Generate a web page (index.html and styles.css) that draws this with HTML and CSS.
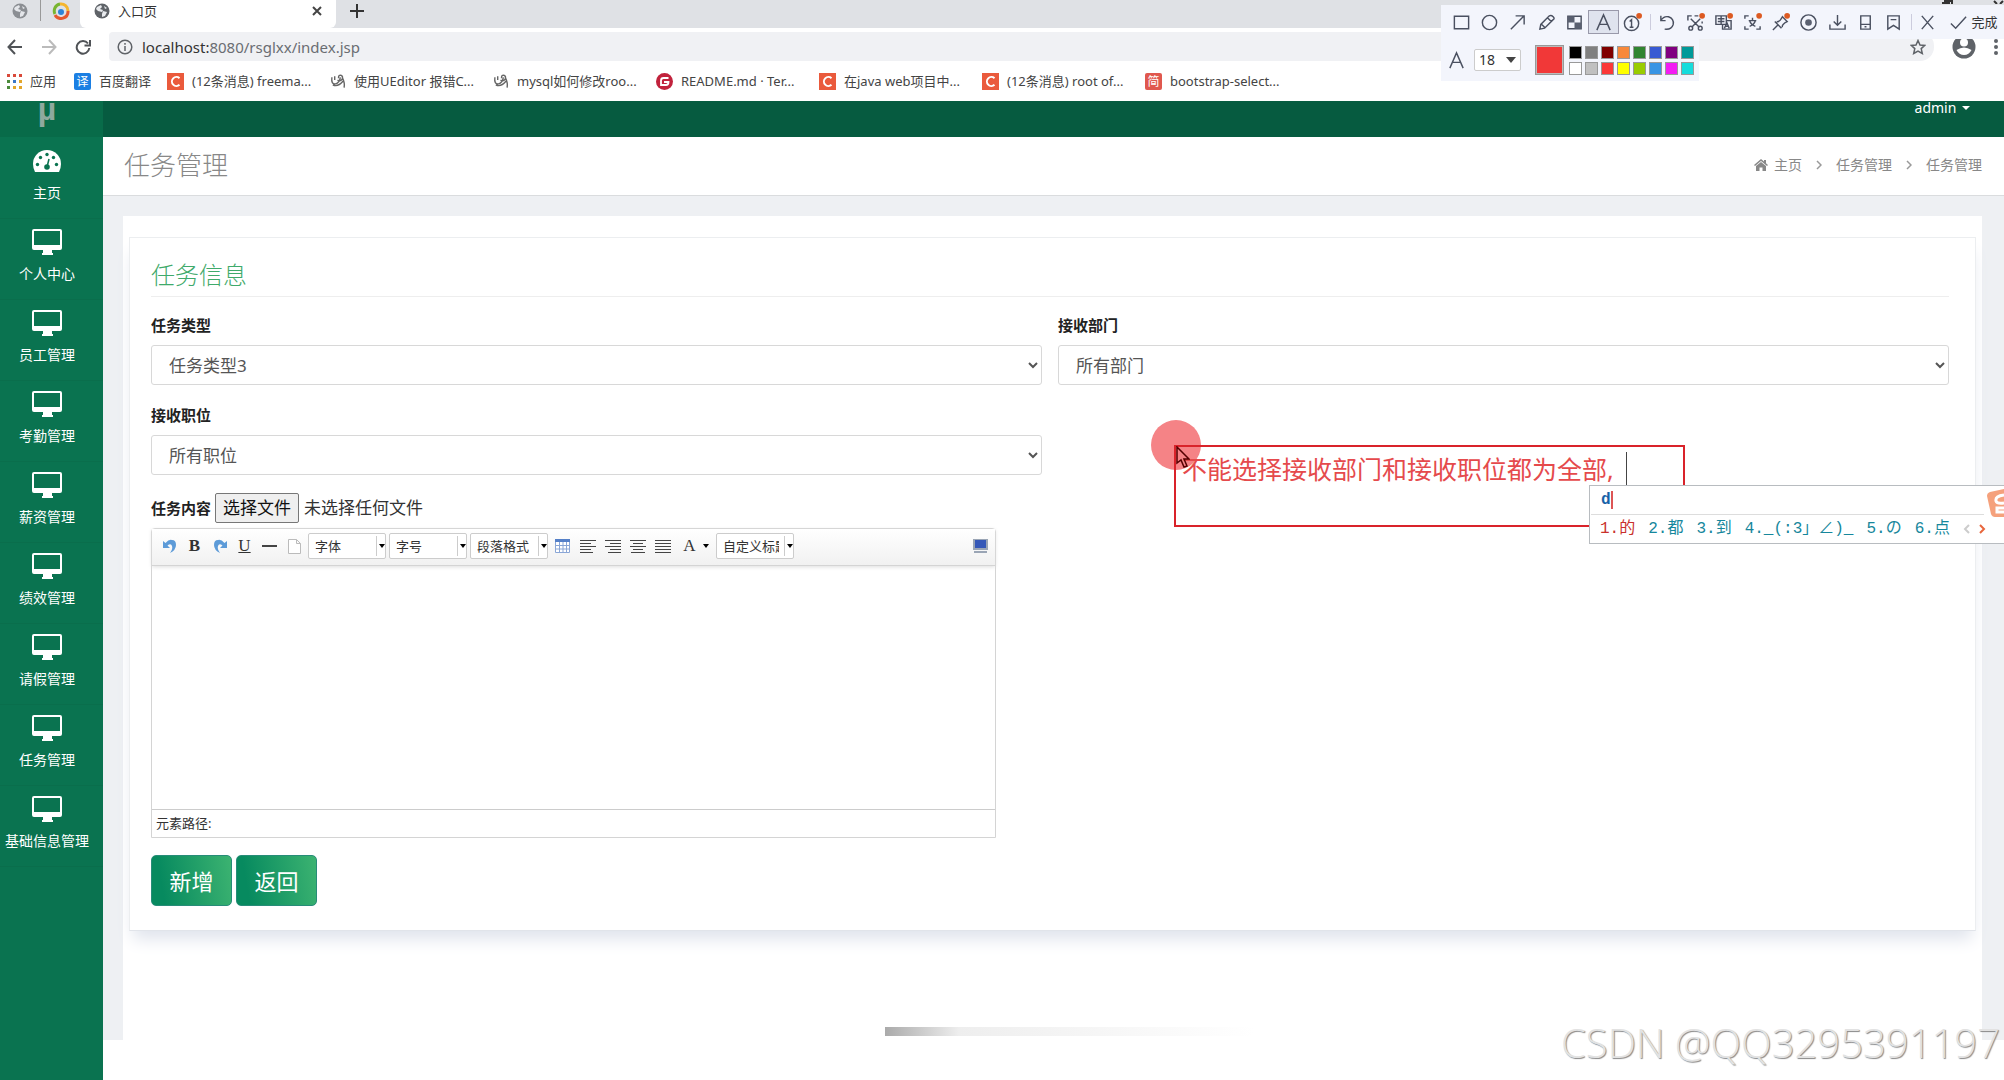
FILE: index.html
```html
<!DOCTYPE html>
<html lang="zh-CN">
<head>
<meta charset="utf-8">
<title>入口页</title>
<link rel="stylesheet" href="styles.css">
</head>
<body>
<svg class="defs" aria-hidden="true">
  <symbol id="desktop" viewBox="0 0 30 26"><path fill="currentColor" fill-rule="evenodd" d="M2 0h26q2 0 2 2v17q0 2-2 2h-8v3h1v2H10v-2h1v-3H2q-2 0-2-2V2q0-2 2-2zM2 2v14h26V2z"/></symbol>
  <symbol id="globe" viewBox="0 0 16 16"><circle cx="8" cy="8" r="7.500" fill="#5f6368"/><path fill="#e8eaed" d="M3 4l4-2 1 2-2 2 3 1-1 2-4-1-2-2zM9 8l4 1-2 4-3 1V11zM10 3l3 2-2 1z"/></symbol>
  <symbol id="csdn" viewBox="0 0 17 17"><rect width="17" height="17" fill="#ea5a3c"/><path d="M12.500 5.200a4.500 4.500 0 1 0 0 6.600" fill="none" stroke="#fff" stroke-width="2"/></symbol>
  <symbol id="swirl" viewBox="0 0 17 17"><path d="M2 4q-1 8 4 7 4-1 5-7M5 3v4M9 5q0-4 3-3 2 1 1 4-2 3-5 1M13 4q3 6 2 11M3 12q5 3 11-4" fill="none" stroke="#666" stroke-width="1.500"/></symbol>
</svg>

<header class="browser">
  <div class="tabs">
    <div class="pinned"><svg width="16" height="16" opacity=".65"><use href="#globe"/></svg></div>
    <div class="pinned pinned-last"><svg width="18" height="18" viewBox="0 0 18 18" fill="none" stroke-width="3"><path d="M3 12A7 7 0 0 1 8 2" stroke="#79b530"/><path d="M8 2a7 7 0 0 1 8 7" stroke="#f5b52e"/><path d="M16 9a7 7 0 0 1-13 4" stroke="#e6592e"/><circle cx="9" cy="10" r="3" fill="#2d84d8"/></svg></div>
    <div class="tab"><svg width="16" height="16"><use href="#globe"/></svg><span>入口页</span><button aria-label="关闭"><svg width="10" height="10" viewBox="0 0 10 10" stroke="#444" stroke-width="2"><path d="M1 1l8 8M9 1L1 9"/></svg></button></div>
    <button class="new-tab" aria-label="新标签页"><svg width="14" height="14" viewBox="0 0 14 14" stroke="#333" stroke-width="2"><path d="M7 0v14M0 7h14"/></svg></button>
  </div>
  <div class="address">
    <button aria-label="后退"><svg width="16" height="16" viewBox="0 0 16 16" fill="none" stroke="#505357" stroke-width="2"><path d="M15 8H2M8 1L1.500 8 8 15"/></svg></button>
    <button aria-label="前进"><svg width="16" height="16" viewBox="0 0 16 16" fill="none" stroke="#bbb" stroke-width="2"><path d="M1 8h13M8 1l6.500 7L8 15"/></svg></button>
    <button aria-label="刷新"><svg width="16" height="16" viewBox="0 0 16 16" fill="none" stroke="#505357" stroke-width="2"><path d="M13 4.500A6.300 6.300 0 1 0 14.300 9M15 1v5.500H9.500"/></svg></button>
    <div class="omnibox">
      <svg width="16" height="16" viewBox="0 0 16 16" fill="none" stroke="#5f6368" stroke-width="1.500"><circle cx="8" cy="8" r="6.800"/><path d="M8 7v5M8 4v1.800"/></svg>
      <span class="url"><b>localhost:</b>8080/rsglxx/index.jsp</span>
      <svg width="16" height="16" viewBox="0 0 16 16" fill="none" stroke="#5f6368" stroke-width="1.500"><path d="M8 1.500l2 4.500 4.800.4-3.600 3.200 1.100 4.900L8 12l-4.300 2.500 1.100-4.900L1.200 6.400 6 6z"/></svg>
    </div>
    <svg class="avatar" width="24" height="24" viewBox="0 0 24 24"><circle cx="12" cy="12" r="11.500" fill="#5f6368"/><circle cx="12" cy="7.500" r="4" fill="#fff"/><path d="M4.500 15q7.500-5 15 0-2.500 5-7.500 5t-7.500-5z" fill="#fff"/></svg>
    <svg width="4" height="18" viewBox="0 0 4 18" fill="#5f6368"><circle cx="2" cy="3" r="2"/><circle cx="2" cy="9" r="2"/><circle cx="2" cy="15" r="2"/></svg>
  </div>
  <nav class="bookmarks">
    <a href="#"><svg width="15" height="15" viewBox="0 0 15 15"><path fill="#d9493a" d="M0 0h3v3H0zM6 0h3v3H6zM12 0h3v3h-3z"/><path fill="#4b8b3b" d="M0 6h3v3H0z"/><path fill="#3a77c9" d="M6 6h3v3H6z"/><path fill="#e3a62b" d="M12 6h3v3h-3zM6 12h3v3H6zM12 12h3v3h-3z"/><path fill="#4b8b3b" d="M0 12h3v3H0z"/></svg>应用</a>
    <a href="#"><span class="fav fav-blue">译</span>百度翻译</a>
    <a href="#"><svg width="17" height="17"><use href="#csdn"/></svg>(12条消息) freema...</a>
    <a href="#"><svg width="16" height="17"><use href="#swirl"/></svg>使用UEditor 报错C...</a>
    <a href="#"><svg width="16" height="17"><use href="#swirl"/></svg>mysql如何修改roo...</a>
    <a href="#"><svg width="17" height="17" viewBox="0 0 17 17"><circle cx="8.500" cy="8.500" r="8.500" fill="#c1223c"/><path d="M12.500 5H7.500Q5 5 5 7.500V12h5q2.500 0 2.500-3H8" fill="none" stroke="#fff" stroke-width="1.800"/></svg>README.md · Ter...</a>
    <a href="#"><svg width="17" height="17"><use href="#csdn"/></svg>在java web项目中...</a>
    <a href="#"><svg width="17" height="17"><use href="#csdn"/></svg>(12条消息) root of...</a>
    <a href="#"><span class="fav fav-red">简</span>bootstrap-select...</a>
  </nav>
</header>

<div class="app">
  <aside class="sidebar">
    <div class="brand">µ</div>
    <nav class="menu">
      <a href="#"><svg width="28" height="22" viewBox="0 0 28 22"><path fill="#fff" d="M2 22Q0 18 0 14a14 14 0 0 1 28 0q0 4-2 8z"/><g fill="#0a7350"><circle cx="4.500" cy="14.500" r="1.700"/><circle cx="7.500" cy="7.500" r="1.700"/><circle cx="14" cy="4.500" r="1.700"/><circle cx="20.500" cy="7.500" r="1.700"/><circle cx="23.500" cy="14.500" r="1.700"/><circle cx="14" cy="17" r="2.800"/></g><path d="M14 17l2-8" stroke="#0a7350" stroke-width="1.500"/></svg>主页</a>
      <a href="#"><svg width="30" height="26"><use href="#desktop"/></svg>个人中心</a>
      <a href="#"><svg width="30" height="26"><use href="#desktop"/></svg>员工管理</a>
      <a href="#"><svg width="30" height="26"><use href="#desktop"/></svg>考勤管理</a>
      <a href="#"><svg width="30" height="26"><use href="#desktop"/></svg>薪资管理</a>
      <a href="#"><svg width="30" height="26"><use href="#desktop"/></svg>绩效管理</a>
      <a href="#"><svg width="30" height="26"><use href="#desktop"/></svg>请假管理</a>
      <a href="#"><svg width="30" height="26"><use href="#desktop"/></svg>任务管理</a>
      <a href="#"><svg width="30" height="26"><use href="#desktop"/></svg>基础信息管理</a>
    </nav>
  </aside>
  <div class="main">
    <div class="topbar"><a href="#">admin <svg width="8" height="4" viewBox="0 0 8 4"><path fill="#fff" d="M0 0h8L4 4z"/></svg></a></div>
    <div class="titlebar">
      <h1>任务管理</h1>
      <nav class="crumbs">
        <a href="#"><svg width="14" height="12" viewBox="0 0 14 12"><path fill="#888" d="M7 0l3 2.600V1h2v3.300L14 6l-1 1-6-5-6 5-1-1zM2 7l5-4 5 4v5H8.500V8.500h-3V12H2z"/></svg>主页</a>
        <svg width="6" height="10" viewBox="0 0 6 10" fill="none" stroke="#999" stroke-width="1.500"><path d="M1 1l4 4-4 4"/></svg>
        <a href="#">任务管理</a>
        <svg width="6" height="10" viewBox="0 0 6 10" fill="none" stroke="#999" stroke-width="1.500"><path d="M1 1l4 4-4 4"/></svg>
        <a href="#">任务管理</a>
      </nav>
    </div>
    <main class="content">
      <div class="panel">
        <form class="card">
          <h2>任务信息</h2>
          <div class="fields">
            <div class="field"><label for="type">任务类型</label><select id="type"><option>任务类型3</option></select></div>
            <div class="field"><label for="dept">接收部门</label><select id="dept"><option>所有部门</option></select></div>
            <div class="field"><label for="post">接收职位</label><select id="post"><option>所有职位</option></select></div>
          </div>
          <div class="file-row">
            <label for="file">任务内容</label>
            <input type="file" id="file" class="file-input">
            <label for="file" class="file-button">选择文件</label>
            <span>未选择任何文件</span>
          </div>
          <div class="editor">
            <div class="tools">
              <button type="button" aria-label="撤销"><svg width="14" height="14" viewBox="0 0 14 14"><path d="M0 2v7h7L4.500 6.500Q8 4 9 7t-2 7q6-3 6-8T9 1Q6 0 2.500 4z" fill="#5d9bd8"/></svg></button>
              <button type="button" class="serif"><b>B</b></button>
              <button type="button" aria-label="重做"><svg width="14" height="14" viewBox="0 0 14 14"><path d="M14 2v7H7l2.500-2.500Q6 4 5 7t2 7Q1 11 1 6t4-5q3-1 6.500 3z" fill="#5d9bd8"/></svg></button>
              <button type="button" class="serif"><u>U</u></button>
              <button type="button" aria-label="分隔线"><svg width="15" height="2"><path fill="#444" d="M0 0h15v2H0z"/></svg></button>
              <button type="button" aria-label="清空"><svg width="13" height="15" viewBox="0 0 13 15" fill="#fff" stroke="#bbb"><path d="M.5.500h8l4 4v10H.5zM8.500.500v4h4"/></svg></button>
              <span class="combo"><select aria-label="字体"><option>字体</option></select><svg width="6" height="4" viewBox="0 0 6 4"><path d="M0 0h6L3 4z"/></svg></span>
              <span class="combo"><select aria-label="字号"><option>字号</option></select><svg width="6" height="4" viewBox="0 0 6 4"><path d="M0 0h6L3 4z"/></svg></span>
              <span class="combo"><select aria-label="段落格式"><option>段落格式</option></select><svg width="6" height="4" viewBox="0 0 6 4"><path d="M0 0h6L3 4z"/></svg></span>
              <button type="button" aria-label="表格"><svg width="15" height="14" viewBox="0 0 15 14" fill="none"><path fill="#fff" stroke="#8aa6d6" d="M.5.500h14v13H.5zM.5 6.500h14M.5 10h14M4.500 3v11M8 3v11M11.500 3v11"/><path fill="#5580c8" d="M0 0h15v3H0z"/></svg></button>
              <button type="button" aria-label="居左"><svg width="16" height="13" viewBox="0 0 16 13" stroke="#444"><path d="M0 .5h16M0 3.500h11M0 6.500h16M0 9.500h11M0 12.500h13"/></svg></button>
              <button type="button" aria-label="居右"><svg width="16" height="13" viewBox="0 0 16 13" stroke="#444"><path d="M0 .5h16M5 3.500h11M0 6.500h16M5 9.500h11M3 12.500h13"/></svg></button>
              <button type="button" aria-label="居中"><svg width="16" height="13" viewBox="0 0 16 13" stroke="#444"><path d="M0 .5h16M3 3.500h10M0 6.500h16M3 9.500h10M1 12.500h14"/></svg></button>
              <button type="button" aria-label="两端对齐"><svg width="16" height="13" viewBox="0 0 16 13" stroke="#444"><path d="M0 .5h16M0 3.500h16M0 6.500h16M0 9.500h16M0 12.500h16"/></svg></button>
              <button type="button" class="serif color">A<svg width="6" height="4" viewBox="0 0 6 4"><path d="M0 0h6L3 4z"/></svg></button>
              <span class="combo"><select aria-label="自定义标题"><option>自定义标题</option></select><svg width="6" height="4" viewBox="0 0 6 4"><path d="M0 0h6L3 4z"/></svg></span>
              <button type="button" class="full" aria-label="全屏"><svg width="15" height="14" viewBox="0 0 15 14"><path fill="#9aa5b5" d="M0 0h15v11H0zM1 12h13v2H1z"/><path fill="#3558b8" d="M2 1h11v8H2z"/></svg></button>
            </div>
            <textarea class="editor-body" aria-label="任务内容"></textarea>
            <div class="path">元素路径:</div>
          </div>
          <div class="actions"><button type="button">新增</button><button type="button">返回</button></div>
        </form>
      </div>
    </main>
  </div>
</div>

<div class="window-bits"><svg width="64" height="4" viewBox="0 0 64 4" fill="none" stroke="#333" stroke-width="2"><path d="M2 3h8M4 1h8v3M54 1l3 3M63 1l-3 3"/></svg></div>
<div class="snip">
  <div class="snip-tools">
    <button aria-label="矩形"><svg viewBox="0 0 20 20"><path d="M2.500 3.500h15v13h-15z"/></svg></button>
    <button aria-label="椭圆"><svg viewBox="0 0 20 20"><circle cx="10" cy="10" r="7.500"/></svg></button>
    <button aria-label="箭头"><svg viewBox="0 0 20 20"><path d="M3 17L17 3M8 3h9v9"/></svg></button>
    <button aria-label="画笔"><svg viewBox="0 0 20 20"><path d="M3 17l1-5 9-9q2-1 4 1t0 3l-9 9zM11 5l4 4M5 12l3 3"/></svg></button>
    <button aria-label="马赛克"><svg viewBox="0 0 20 20"><path d="M3 3.500h14v13H3z"/><path class="fill" d="M3 3.500h7V10H3zM10 10h7v6.500h-7z"/></svg></button>
    <button class="on" aria-label="文字"><svg viewBox="0 0 20 20"><path d="M3 18L10 2l7 16M6 12h8"/></svg></button>
    <button aria-label="序号"><svg viewBox="0 0 20 20"><circle cx="9" cy="11" r="7.500"/><path d="M7 9l2-2v8M7 15h4"/><circle class="dot" cx="17" cy="3" r="3"/></svg></button>
    <i></i>
    <button aria-label="撤销"><svg viewBox="0 0 20 20"><path d="M3 3v5h5M3 8q3-5 8-4 6 2 5 8-2 6-9 5"/></svg></button>
    <button aria-label="截图"><svg viewBox="0 0 20 20"><path d="M2 8V3h4M9 3h4M5 6l9 9M15 6l-9 9M17 9v2"/><circle cx="5" cy="16" r="2"/><circle cx="15" cy="16" r="2"/><circle class="dot" cx="17" cy="3" r="3"/></svg></button>
    <button aria-label="翻译"><svg viewBox="0 0 20 20"><path d="M2 3h11v9H2zM4 6h7M4 9h7M7.500 3v9M9 12v5h9V8h-5M11 16l2.500-6 2.500 6M12 14h3"/><circle class="dot" cx="17" cy="3" r="3"/></svg></button>
    <button aria-label="文字识别"><svg viewBox="0 0 20 20"><path d="M2 6V3h4M2 14v3h4M18 14v3h-4M6 8h8M10 5v3M7 14q5-2 6-6M7 8q1 4 6 6"/><circle class="dot" cx="17" cy="3" r="3"/></svg></button>
    <button aria-label="钉住"><svg viewBox="0 0 20 20"><path d="M2 18l5-5M4 9l7 7M6 9q3 1 6-5l5 5q-6 3-5 6"/><circle class="dot" cx="17" cy="3" r="3"/></svg></button>
    <button aria-label="录制"><svg viewBox="0 0 20 20"><circle cx="10" cy="10" r="8"/><circle class="fill" cx="10" cy="10" r="3.500"/></svg></button>
    <button aria-label="下载"><svg viewBox="0 0 20 20"><path d="M10 2v11M6 9l4 4 4-4M2 12v5h16v-5"/></svg></button>
    <button aria-label="发送到手机"><svg viewBox="0 0 20 20"><path d="M5 3h10v14H5zM5 12h10M9 14.500h2"/></svg></button>
    <button aria-label="收藏"><svg viewBox="0 0 20 20"><path d="M4 3h12v14l-6-4-6 4zM7 7h6"/></svg></button>
    <i></i>
    <button aria-label="取消"><svg viewBox="0 0 20 20"><path d="M4 3l12 14M16 3L4 17"/></svg></button>
    <button class="done"><svg viewBox="0 0 20 20"><path d="M2 11l5 5L18 4"/></svg>完成</button>
  </div>
  <div class="snip-style">
    <svg class="glyph" viewBox="0 0 20 20"><path d="M3 18L10 2l7 16M6 12h8"/></svg>
    <span class="combo size"><select aria-label="字号"><option>18</option></select><svg width="10" height="6" viewBox="0 0 10 6"><path d="M0 0h10L5 6z"/></svg></span>
    <span class="current"></span>
    <div class="swatches">
      <span style="background:#000"></span><span style="background:#808080"></span><span style="background:#800000"></span><span style="background:#f7883a"></span><span style="background:#308430"></span><span style="background:#385ad3"></span><span style="background:#800080"></span><span style="background:#099"></span>
      <span style="background:#fff"></span><span style="background:#c0c0c0"></span><span style="background:#fb3838"></span><span style="background:#ff0"></span><span style="background:#9c0"></span><span style="background:#3894e4"></span><span style="background:#f31bf3"></span><span style="background:#16dcdc"></span>
    </div>
  </div>
</div>

<div class="spot"></div>
<div class="note"><span>不能选择接收部门和接收职位都为全部,</span></div>
<svg class="cursor" width="14" height="22" viewBox="0 0 14 22"><path d="M1 1v16l4-3 3 7 3-1-3-7h5z" fill="none" stroke="#500" stroke-width="1.500"/></svg>
<div class="ime">
  <div class="ime-input">d</div>
  <div class="ime-list"><span class="first">1.的</span><span>2.都</span><span>3.到</span><span>4._(:3」∠)_</span><span>5.の</span><span>6.点</span><svg width="24" height="10" viewBox="0 0 24 10" fill="none" stroke-width="2"><path d="M6 1L2 5l4 4" stroke="#ccc"/><path d="M17 1l4 4-4 4" stroke="#e8663c"/></svg></div>
  <svg class="sogou" width="18" height="30" viewBox="0 0 18 30"><path d="M18 1L4 4Q1 5 1 8l4 18q1 3 4 3h9z" fill="#f5a17c"/><path d="M18 7q-9 1-8 6 1 3 8 2M18 20h-7v4h7" fill="none" stroke="#fff" stroke-width="3"/></svg>
</div>
<div class="streak"></div>
<div class="watermark">CSDN @QQ3295391197</div>
</body>
</html>
```
FILE: styles.css
```css
* { box-sizing: border-box; }
body {
  margin: 0; min-height: 100vh; position: relative; overflow-x: hidden;
  display: flex; flex-direction: column;
  font: 14px/20px "Noto Sans", "Noto Sans CJK SC", sans-serif;
  color: #333; background: #fff;
}
a { color: inherit; text-decoration: none; }
button { border: 0; padding: 0; background: none; font: inherit; color: inherit; }
button, .menu a { cursor: pointer; }
svg { flex: none; }
.defs { position: absolute; width: 0; height: 0; }

/* browser window */
.browser { height: 101px; flex: none; }
.tabs { display: flex; height: 28px; background: #dfe1e5; }
.tabs > * { display: flex; align-items: center; height: 21px; }
.pinned { width: 41px; justify-content: center; border-right: 1px solid #999; }
.pinned-last { width: 39px; border: 0; }
.tabs .tab { width: 256px; height: 28px; padding: 0 14px 7px; gap: 8px; background: #fff; font-size: 13px; border-radius: 0 0 6px 6px; }
.tab span { flex: 1; }
.new-tab { padding-left: 14px; }
.address { display: flex; align-items: center; height: 37px; padding: 0 6px 0 7px; gap: 18px; }
.address button { display: flex; }
.omnibox { flex: 1; display: flex; align-items: center; gap: 9px; height: 29px; padding: 0 8px; background: #f0f1f4; border-radius: 4px 14px 14px 4px; }
.url { flex: 1; font-size: 15px; color: #6a6d72; }
.url b { font-weight: 400; color: #333; }
.bookmarks { display: grid; grid-template-columns: 67px 93px repeat(7, 163px); padding: 6px 0 0 7px; font-size: 13px; color: #444; }
.bookmarks a { display: flex; align-items: center; gap: 8px; height: 20px; white-space: nowrap; }
.fav { width: 17px; height: 17px; font-size: 12px; line-height: 17px; text-align: center; color: #fff; border-radius: 2px; }
.fav-blue { background: #1b7fe3; }
.fav-red { background: #e0584e; }

/* application */
.app { flex: 1; display: flex; }
.sidebar { width: 103px; flex: none; background: #0a7350; color: #fff; }
.brand { height: 36px; padding-right: 9px; overflow: hidden; background: #086b49; color: #8fa99e; font: bold 32px/16px "Liberation Sans", sans-serif; text-align: center; }
.menu { padding-top: 1px; }
.menu a { display: flex; flex-direction: column; align-items: center; height: 81px; padding: 10px 9px 15px 0; justify-content: space-between; border-bottom: 1px solid #0a6e4c; white-space: nowrap; }
.menu svg { height: 26px; }
.main { flex: 1; min-width: 0; display: flex; flex-direction: column; }
.topbar { height: 36px; padding-right: 34px; background: #065b40; color: #fff; text-align: right; line-height: 14px; }
.topbar svg { margin: 0 0 2px 2px; vertical-align: middle; }
.titlebar { display: flex; justify-content: space-between; align-items: center; height: 59px; padding: 0 22px 2px 21px; border-bottom: 1px solid #dadcde; color: #888; }
h1, h2 { margin: 0; font-weight: 300; }
h1 { font-size: 26px; line-height: 36px; }
.crumbs { display: flex; align-items: center; gap: 14px; }
.crumbs a { display: flex; align-items: center; gap: 6px; }
.content { flex: 1; display: flex; margin-bottom: 40px; padding: 20px 22px 0 20px; background: #eef0f3; }
.panel { flex: 1; padding: 21px 6px 0; background: #fff; }
.card { padding: 21px 26px 24px 21px; border: 1px solid #eceef0; border-bottom-color: #e1e4ea; box-shadow: 0 12px 16px -4px #dfe3ec; }
h2 { padding-bottom: 5px; border-bottom: 1px solid #eee; font-size: 24px; line-height: 32px; color: #3faa6b; }
.fields { display: grid; grid-template-columns: 1fr 1fr; gap: 20px 16px; padding-top: 18px; }
.field label, .file-row label:first-child { display: block; font-size: 15px; font-weight: 700; color: #222; }
.field select { width: 100%; height: 40px; margin-top: 10px; padding: 0 13px; border: 1px solid #d8d8d8; border-radius: 3px; background: #fff; font: inherit; font-size: 17px; color: #555; }
.file-row { display: flex; align-items: center; gap: 4px; padding: 18px 0 5px; font-size: 17px; }
.file-input { position: absolute; width: 1px; height: 1px; opacity: 0; }
.file-button { height: 30px; padding: 0 7px; border: 1px solid #777; border-radius: 2px; background: #efefef; line-height: 28px; color: #111; }
.file-row span { padding-left: 1px; }

.editor { width: 46%; min-width: 845px; border: 1px solid #d4d4d4; border-radius: 4px 4px 0 0; }
.tools { display: flex; align-items: center; height: 37px; padding: 0 2px 2px 5px; background: linear-gradient(#fff, #f1f1f1); border-bottom: 1px solid #d4d4d4; box-shadow: 0 1px 4px #ddd; }
.tools button { width: 25px; height: 22px; display: flex; align-items: center; justify-content: center; }
.tools .serif { font: 17px/20px "Liberation Serif", serif; }
.tools .color { width: 38px; gap: 7px; margin-left: 2px; }
.tools .full { margin-left: auto; }
.combo { display: grid; align-items: center; width: 78px; height: 26px; margin: 0 2px; }
.combo > * { grid-area: 1 / 1; }
.tools .combo { margin: 0 2px 0 1px; }
.combo select { appearance: none; width: 100%; height: 100%; padding: 0 14px 0 6px; border: 1px solid #ccc; border-radius: 2px; background: linear-gradient(#ccc, #ccc) right 8px center / 1px 20px no-repeat #fff; font: inherit; font-size: 13px; color: #333; }
.combo svg { justify-self: end; margin-right: 1px; pointer-events: none; }
.editor-body { display: block; width: 100%; height: 243px; border: 0; resize: none; background: transparent; }
.path { height: 28px; padding: 0 4px; border-top: 1px solid #ccc; font-size: 13px; line-height: 26px; }
.actions { display: flex; gap: 4px; padding-top: 17px; }
.actions button { width: 81px; height: 51px; border: 1px solid #278c78; border-radius: 5px; background: linear-gradient(80deg, #078a5f 15%, #3cb371); color: #fff; font-size: 22px; }

/* screenshot tool over the window */
.window-bits { position: absolute; top: 0; right: 0; display: flex; }
.snip { position: absolute; top: 5px; right: 0; width: 563px; }
.snip-tools { display: flex; align-items: center; height: 34px; padding-left: 6px; background: #f3f5fc; }
.snip-tools button { flex: 1; height: 24px; display: flex; align-items: center; justify-content: center; }
.snip svg[viewBox="0 0 20 20"] { width: 19px; height: 19px; fill: none; stroke: #4a5060; stroke-width: 1.5; overflow: visible; }
.snip .dot { fill: #dc5a22; stroke: none; }
.snip .fill { fill: #5a6070; stroke: none; }
.snip-tools i { width: 1px; height: 16px; margin: 0 2px 0 3px; background: #ccd; }
.snip-tools .on { border: 1px solid #99a; background: #dfe3ee; }
.snip-tools .done { flex: 0 0 62px; gap: 4px; font-size: 13px; }
.snip-style { display: flex; align-items: center; width: 258px; height: 42px; padding-left: 6px; background: #f3f5fc; }
.snip .combo { width: 47px; height: 22px; margin: 0 14px 0 8px; }
.snip .combo select { padding: 0 0 0 4px; background: #fff; font-size: 14px; }
.snip .combo svg { margin-right: 5px; fill: #444; }
.current { width: 29px; height: 30px; border: 2px solid #bbb; outline: 1px solid #999; outline-offset: -1px; background: #f13838; }
.swatches { display: grid; grid-template-columns: repeat(8, 13px); grid-auto-rows: 13px; gap: 3px; margin-left: 5px; }
.swatches span { border: 1px solid #999; }

/* annotations */
.spot { position: absolute; left: 1151px; top: 420px; width: 50px; height: 50px; border-radius: 50%; background: #f58386; }
.note { position: absolute; left: 1174px; top: 445px; width: 511px; height: 82px; padding: 5px 0 0 6px; border: 2px solid #d9232a; color: #e54a4c; font-size: 25px; line-height: 34px; white-space: nowrap; }
.note span { display: inline-block; padding-right: 12px; border-right: 1px solid #444; }
.cursor { position: absolute; left: 1176px; top: 446px; }
.ime { position: absolute; left: 1589px; right: 0; top: 485px; height: 59px; border: 1px solid #b8bcc0; border-right: 0; background: #fff; overflow: hidden; font: 16px/28px "Liberation Mono", "Noto Sans CJK SC", monospace; color: #16879c; }
.ime-input { height: 29px; margin: 0 20px 0 1px; padding-left: 10px; border-bottom: 1px solid #ddd; color: #1763a8; font-weight: 700; }
.ime-input::after { content: ""; border-right: 2px solid #d55; }
.ime-list { display: flex; align-items: center; gap: 13px; padding-left: 10px; white-space: nowrap; }
.ime-list .first { color: #c9302c; }
.sogou { position: absolute; right: 0; top: 2px; }
.streak { position: absolute; left: 885px; bottom: 44px; width: 370px; height: 9px; background: linear-gradient(90deg, #aaa, #eee 20%, #fff); }
.watermark { position: absolute; right: 4px; bottom: 12px; font: 300 40px/50px "Open Sans", sans-serif; color: #e2e2e2; text-shadow: 1px 1px 1px #888; white-space: nowrap; }
```
